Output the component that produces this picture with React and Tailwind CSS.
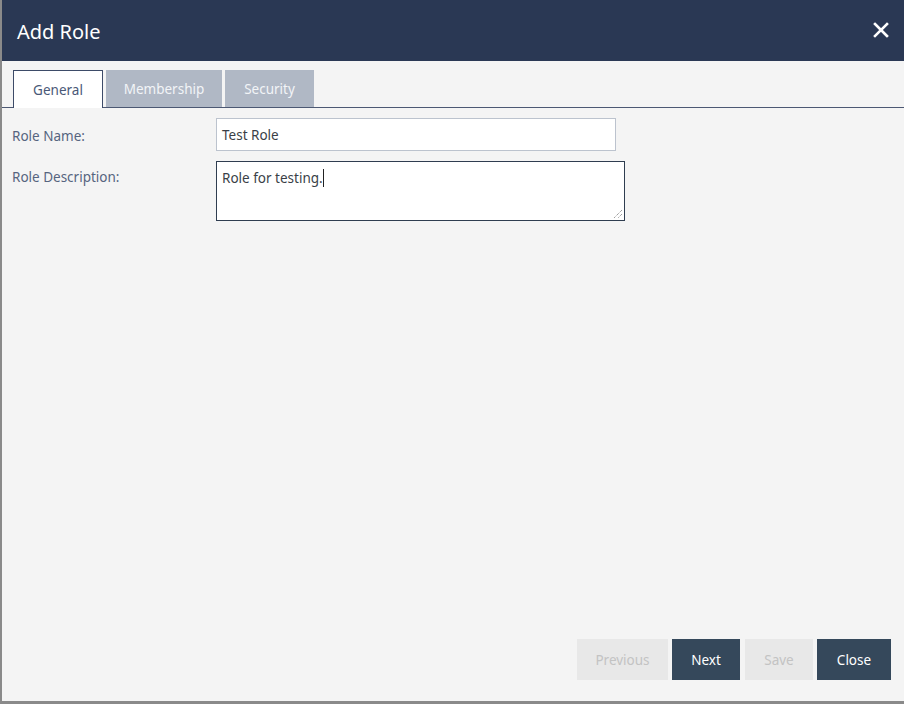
import React from "react";

export default function App() {
  return (
    <div
      className="w-[904px] h-[704px] bg-[#8a8a8a] pl-[2px] pb-[3px] overflow-hidden"
      style={{ fontFamily: '"Noto Sans", "Open Sans", sans-serif' }}
    >
      <div className="w-full h-full bg-[#f4f4f4] flex flex-col">
        <div className="h-[61px] bg-[#2a3854] flex items-center justify-between pl-[15px] pr-[15px] shrink-0">
          <div className="text-white text-[20px] leading-none mt-[3px]">Add Role</div>
          <svg width="16" height="16" viewBox="0 0 16 16" className="mb-[2px]">
            <path d="M2 2 L14 14 M14 2 L2 14" stroke="white" strokeWidth="2.6" strokeLinecap="square" />
          </svg>
        </div>
        <div className="flex items-end pl-[11px] pt-[9px] border-b border-[#4c5873] gap-[3px] h-[47px] shrink-0">
          <div className="w-[90px] h-[38px] -mb-px bg-white border border-b-0 border-[#3d4b68] flex items-center justify-center pt-[2px] text-[13.5px] text-[#4a5877]">
            General
          </div>
          <div className="w-[116px] h-[37px] bg-[#b0b8c5] flex items-center justify-center pt-[2px] text-[13.5px] text-[#f2f4f7]">
            Membership
          </div>
          <div className="w-[89px] h-[37px] bg-[#b0b8c5] flex items-center justify-center pt-[2px] text-[13.5px] text-[#f2f4f7]">
            Security
          </div>
        </div>
        <div className="flex-1 flex flex-col pl-[10px]">
          <div className="flex mt-[10px]">
            <div className="w-[204px] pt-[8px] text-[13.5px] text-[#56647f]">Role Name:</div>
            <div className="w-[400px] h-[33px] bg-white border border-[#bcc3ce] flex items-center pt-[2px] px-[5px] text-[13.5px] text-[#3a3f47]">
              Test Role
            </div>
          </div>
          <div className="flex mt-[10px]">
            <div className="w-[204px] pt-[6px] text-[13.5px] text-[#56647f]">Role Description:</div>
            <div className="relative w-[409px] h-[60px] bg-white border border-[#2f3d50] px-[5px] pt-[7px] text-[13.5px] text-[#3a3f47] leading-[18px]">
              <span>Role for testing.</span>
              <span className="inline-block w-px h-[18px] bg-[#222] align-top"></span>
              <svg width="10" height="10" viewBox="0 0 10 10" className="absolute right-[1px] bottom-[1px]">
                <path d="M9 1 L1 9 M9 5 L5 9" stroke="#777" strokeWidth="1" strokeDasharray="1 1" />
              </svg>
            </div>
          </div>
          <div className="flex-1" />
          <div className="flex justify-end pr-[13px] mb-[21px] text-[13.5px]">
            <div className="w-[91px] h-[41px] bg-[#e8e8e8] text-[#c3c3c3] flex items-center justify-center pt-[1px]">Previous</div>
            <div className="w-[68px] h-[41px] ml-[4px] bg-[#35485b] text-white flex items-center justify-center pt-[1px]">Next</div>
            <div className="w-[68px] h-[41px] ml-[5px] bg-[#e8e8e8] text-[#c3c3c3] flex items-center justify-center pt-[1px]">Save</div>
            <div className="w-[74px] h-[41px] ml-[4px] bg-[#35485b] text-white flex items-center justify-center pt-[1px]">Close</div>
          </div>
        </div>
      </div>
    </div>
  );
}
